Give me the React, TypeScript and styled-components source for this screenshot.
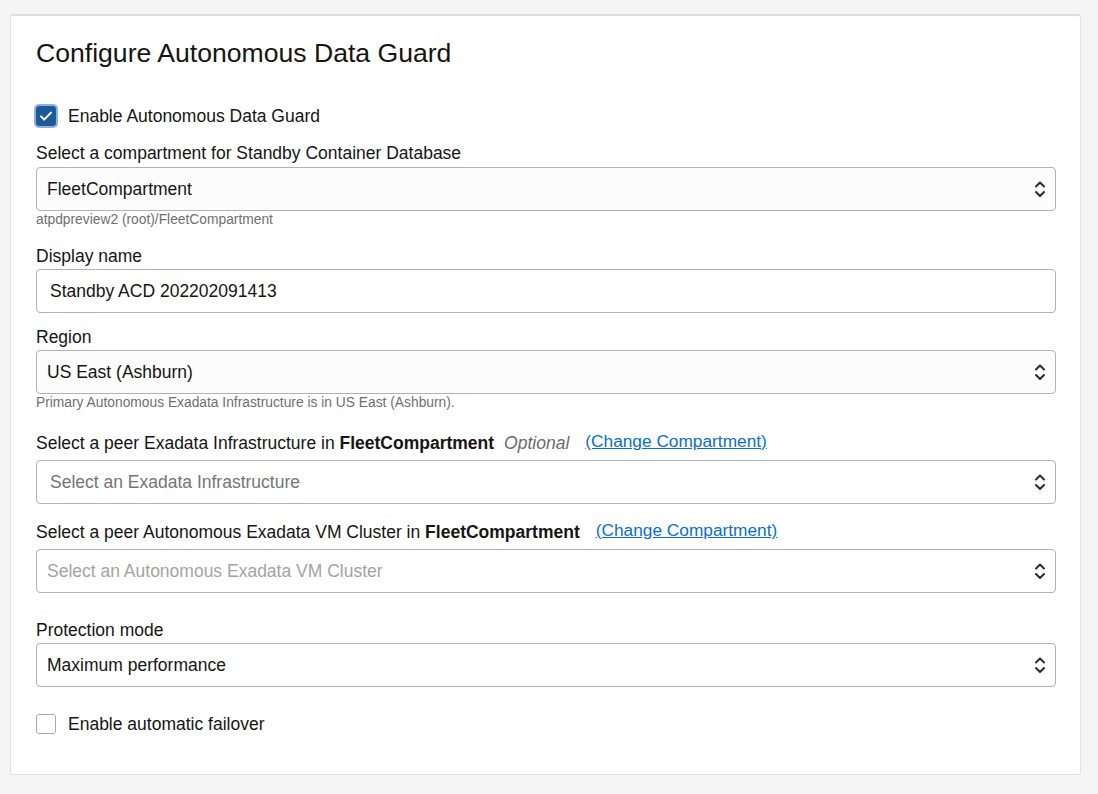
import React from "react";
import styled, { createGlobalStyle } from "styled-components";

const GlobalStyle = createGlobalStyle`
  html, body { margin: 0; padding: 0; background: #f5f5f5; }
  body { font-family: "Liberation Sans", Arial, sans-serif; color: #161513; }
  * { box-sizing: border-box; }
`;

const Page = styled.div`
  padding: 14px 17px 20px 10px;
`;

const Card = styled.section`
  background: #fff;
  border: 1px solid #e2e2e2;
  border-top: 2px solid #dedede;
  border-radius: 3px;
  padding: 21px 24px 38px 25px;
  display: flex;
  flex-direction: column;
`;

const Title = styled.h2`
  margin: 0;
  font-size: 26.6px;
  line-height: 32px;
  font-weight: 400;
  color: #161513;
`;

const CheckRow = styled.label<{ $mt: number }>`
  display: flex;
  align-items: center;
  gap: 12px;
  height: 24px;
  margin-top: ${(p) => p.$mt}px;
  font-size: 17.5px;
  color: #161513;
`;

const Box = styled.span<{ $checked?: boolean }>`
  width: 20px;
  height: 20px;
  border-radius: 3px;
  display: inline-flex;
  align-items: center;
  justify-content: center;
  background: ${(p) => (p.$checked ? "#1d5a98" : "#fff")};
  border: 1px solid ${(p) => (p.$checked ? "#1d5a98" : "#a9a9ad")};
  box-shadow: ${(p) => (p.$checked ? "0 0 0 2px #8db2de" : "none")};
`;

const Field = styled.div<{ $mt: number }>`
  display: flex;
  flex-direction: column;
  margin-top: ${(p) => p.$mt}px;
`;

const Label = styled.div<{ $gap: number }>`
  font-size: 17.5px;
  line-height: 22px;
  margin-bottom: ${(p) => p.$gap}px;
  color: #161513;
  display: flex;
  align-items: baseline;
  white-space: nowrap;
`;

const Bold = styled.b`
  font-weight: 700;
  margin-right: 10px;
`;

const Optional = styled.i`
  color: #6b6b6b;
  margin-right: 16px;
`;

const Link = styled.a<{ $ml: number }>`
  color: #0a6ed1;
  font-size: 17.3px;
  text-decoration: underline;
  margin-left: ${(p) => p.$ml}px;
  position: relative;
  top: -2px;
  cursor: pointer;
`;

const Control = styled.div<{ $bg: string; $pad: number }>`
  height: 44px;
  border: 1px solid #b1b1b7;
  border-radius: 4px;
  background: ${(p) => p.$bg};
  display: flex;
  align-items: center;
  justify-content: space-between;
  padding: 0 9px 0 ${(p) => p.$pad}px;
  font-size: 17.5px;
`;

const Value = styled.span<{ $color: string }>`
  color: ${(p) => p.$color};
`;

const Helper = styled.div`
  font-size: 13.8px;
  line-height: 18px;
  color: #6f6f6f;
`;

const Check = () => (
  <svg width="16" height="16" viewBox="0 0 16 16" fill="none">
    <path d="M3 8.4l3.2 3.2L13 4.6" stroke="#fff" strokeWidth="2" strokeLinecap="round" strokeLinejoin="round" />
  </svg>
);

const Chevrons = () => (
  <svg width="12" height="22" viewBox="0 0 12 22" fill="none">
    <path d="M2 8.5l4-4 4 4" stroke="#2c2c2c" strokeWidth="2" strokeLinecap="round" strokeLinejoin="round" />
    <path d="M2 14l4 4 4-4" stroke="#2c2c2c" strokeWidth="2" strokeLinecap="round" strokeLinejoin="round" />
  </svg>
);

type SelectProps = { value: string; color?: string; bg?: string; pad?: number; chevron?: boolean };

const Select = ({ value, color = "#161513", bg = "#fcfcfc", pad = 10, chevron = true }: SelectProps) => (
  <Control $bg={bg} $pad={pad}>
    <Value $color={color}>{value}</Value>
    {chevron && <Chevrons />}
  </Control>
);

export default function App() {
  return (
    <>
      <GlobalStyle />
      <Page>
        <Card>
          <Title>Configure Autonomous Data Guard</Title>
          <CheckRow $mt={35}>
            <Box $checked>
              <Check />
            </Box>
            Enable Autonomous Data Guard
          </CheckRow>

          <Field $mt={14}>
            <Label $gap={3}>Select a compartment for Standby Container Database</Label>
            <Select value="FleetCompartment" />
            <Helper>atpdpreview2 (root)/FleetCompartment</Helper>
          </Field>

          <Field $mt={16}>
            <Label $gap={2}>Display name</Label>
            <Select value="Standby ACD 202202091413" bg="#fff" pad={13} chevron={false} />
          </Field>

          <Field $mt={13}>
            <Label $gap={2}>Region</Label>
            <Select value="US East (Ashburn)" />
            <Helper>Primary Autonomous Exadata Infrastructure is in US East (Ashburn).</Helper>
          </Field>

          <Field $mt={20}>
            <Label $gap={6}>
              Select a peer Exadata Infrastructure in&nbsp;<Bold>FleetCompartment</Bold>
              <Optional>Optional</Optional>
              <Link $ml={0}>(Change Compartment)</Link>
            </Label>
            <Select value="Select an Exadata Infrastructure" color="#757575" bg="#fff" pad={13} />
          </Field>

          <Field $mt={17}>
            <Label $gap={6}>
              Select a peer Autonomous Exadata VM Cluster in&nbsp;<Bold>FleetCompartment</Bold>
              <Link $ml={6}>(Change Compartment)</Link>
            </Label>
            <Select value="Select an Autonomous Exadata VM Cluster" color="#a3a3a3" bg="#fff" />
          </Field>

          <Field $mt={26}>
            <Label $gap={2}>Protection mode</Label>
            <Select value="Maximum performance" bg="#fff" />
          </Field>

          <CheckRow $mt={25}>
            <Box />
            Enable automatic failover
          </CheckRow>
        </Card>
      </Page>
    </>
  );
}
